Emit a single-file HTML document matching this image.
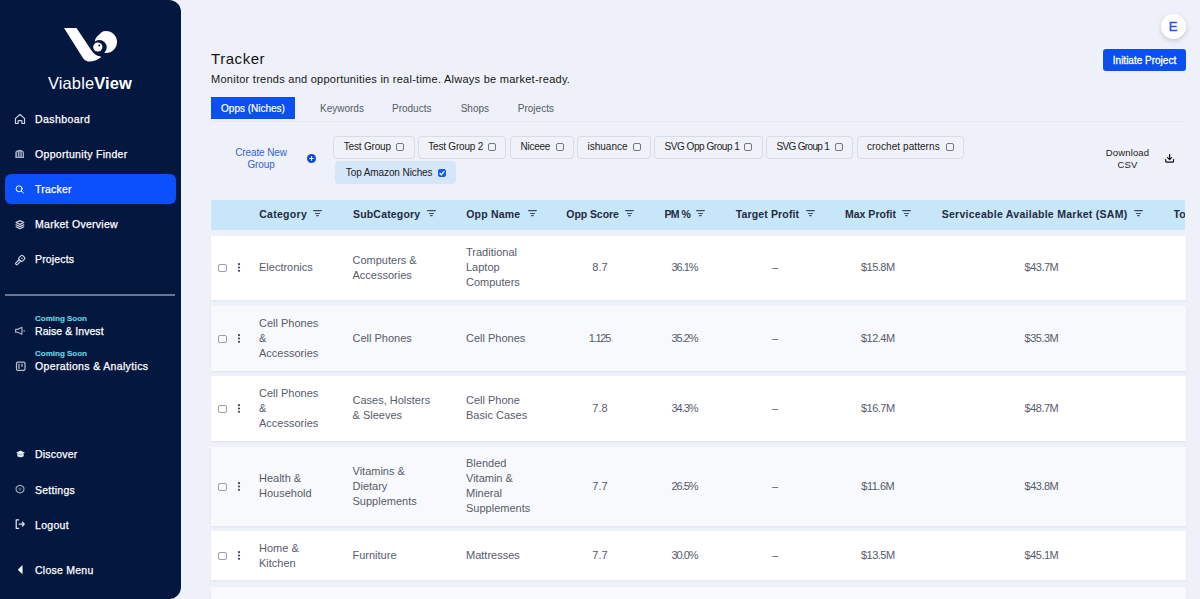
<!DOCTYPE html>
<html><head><meta charset="utf-8">
<style>
*{box-sizing:border-box;margin:0;padding:0}
html,body{width:1200px;height:599px;overflow:hidden;background:#eef1f9;font-family:"Liberation Sans",sans-serif}
.abs{position:absolute}
#side{position:absolute;left:0;top:0;width:181px;height:599px;background:#04173f;border-radius:0 12px 12px 0}
.nav{position:absolute;left:35px;color:#fff;font-size:10.5px;line-height:14px;white-space:nowrap;-webkit-text-stroke:0.25px #fff}
.soon{position:absolute;left:35px;color:#62d8e0;font-size:8px;font-weight:bold;line-height:9px;white-space:nowrap;-webkit-text-stroke:0.15px #62d8e0}
.t{position:absolute;white-space:nowrap}
.tab{font-size:10px;color:#555b66;line-height:12px}
.chip{position:absolute;border:1px solid #d8dce4;border-radius:4px;background:#f0f2f9}
.ct{font-size:10px;line-height:12px;color:#222}
.cb{position:absolute;width:8.2px;height:8px;border:1px solid #74777e;border-radius:2px}
.chip.sel{background:#d5e6f9;border-color:#d5e6f9}
.cb.on{background:#1a5ce6;border-color:#1a5ce6}
.cb.on svg{position:absolute;left:-0.9px;top:-1px}
.hdr{position:absolute;left:211px;top:200px;width:974.3px;height:30px;background:#c8e6f9}
.hl{position:absolute;font-size:10.5px;font-weight:bold;color:#1f2a44;white-space:nowrap;line-height:14px}
.fi{position:absolute;top:210px}
.row{position:absolute;left:211px;width:974.5px;background:#fff;box-shadow:0 1px 2px rgba(40,50,90,.07)}
.row.g{background:#f8f9fc}
.c{position:absolute;font-size:11px;line-height:15px;color:#575c6a;white-space:nowrap}
.ctr{text-align:center}
.rcb{position:absolute;left:7.2px;width:8.7px;height:8px;border:1.1px solid #9a9ea6;border-radius:2px}
.keb{position:absolute;left:26px;fill:#3f4558}
</style></head><body>
<div id="side">
<svg class="abs" style="left:0;top:0" width="181" height="100" viewBox="0 0 181 100">
<defs><clipPath id="cl"><path d="M94,39.5 L106,28 L130,28 L130,70 L80,70 Z"/></clipPath></defs>
<path d="M64,28 L76.5,28 L91.5,50.5 Q95,56 101,56.5 L100.5,57.5 Q95,62 88,61.5 Q84,60.5 82,56.5 Z" fill="#fff"/>
<circle cx="106" cy="42" r="11" fill="#fff" clip-path="url(#cl)"/>
<circle cx="99.4" cy="47.4" r="7.3" fill="#04173f"/>
<circle cx="97.8" cy="47" r="4.6" fill="#fff"/>
<circle cx="99.3" cy="45.4" r="1" fill="#04173f"/>
</svg>
<div class="t" style="left:48px;top:73.8px;font-size:16.5px;color:#fff;line-height:18px;letter-spacing:0.1px">Viable<b>View</b></div>
<div class="abs" style="left:5px;top:174.3px;width:170.5px;height:29.7px;background:#0b50fa;border-radius:6px"></div>
<div class="nav" style="top:112.2px;letter-spacing:0.43px">Dashboard</div>
<div class="nav" style="top:147.2px;letter-spacing:0.31px">Opportunity Finder</div>
<div class="nav" style="top:182.2px;letter-spacing:0.21px">Tracker</div>
<div class="nav" style="top:217.2px;letter-spacing:0.28px">Market Overview</div>
<div class="nav" style="top:252.2px;letter-spacing:0.17px">Projects</div>
<div class="nav" style="top:323.5px;letter-spacing:0.07px">Raise &amp; Invest</div>
<div class="nav" style="top:358.5px;letter-spacing:0.35px">Operations &amp; Analytics</div>
<div class="nav" style="top:447.4px;letter-spacing:0.19px">Discover</div>
<div class="nav" style="top:482.5px;letter-spacing:0.26px">Settings</div>
<div class="nav" style="top:517.6px;letter-spacing:0.31px">Logout</div>
<div class="nav" style="top:562.8px;letter-spacing:0.25px">Close Menu</div>
<div class="abs" style="left:5px;top:294.3px;width:170.3px;height:1.6px;background:#6c7493"></div>
<div class="soon" style="top:313.6px">Coming Soon</div>
<div class="soon" style="top:348.6px">Coming Soon</div>
<svg class="abs" style="left:0;top:0" width="40" height="599" viewBox="0 0 40 599" fill="none" stroke="#d3d7e6" stroke-width="1.2" stroke-linejoin="round" stroke-linecap="round">
<path d="M15.5,118.4 L20,114.5 L24.5,118.4 V123.5 H21.9 V121.3 Q21.9,120.6 21.2,120.6 H18.8 Q18.1,120.6 18.1,121.3 V123.5 H15.5 Z" stroke-width="1.15"/>
<path d="M15.3,158 V152.8 Q15.3,150.3 19.6,149.8 Q24,150.3 24,152.8 V158 Z" fill="#a9b0c8" stroke="none"/><path d="M17.4,152.3 V156.4 M19.9,152 V156.4 M22.3,152.3 V156.4" stroke="#04173f" stroke-width="0.9"/>
<circle cx="19.1" cy="188.8" r="3" stroke="#fff" stroke-width="1"/>
<path d="M21.3,191 L23.4,193" stroke="#fff" stroke-width="1"/>
<path d="M19.9,220.6 L23.8,222.5 L19.9,224.4 L16,222.5 Z M16,224.7 L19.9,226.6 L23.8,224.7 M16,226.8 L19.9,228.7 L23.8,226.8"/>
<g transform="rotate(45 21.8 258.4)"><rect x="19.3" y="255.7" width="5" height="5.4" rx="1.6" stroke-width="1.1"/><rect x="20.7" y="261.1" width="2.2" height="5.6" rx="1" stroke-width="1.1"/><circle cx="21.8" cy="258.2" r="0.7" fill="#d3d7e6" stroke="none"/></g>
<path d="M15.6,329.4 H17.6 L21.9,327.3 V334.3 L17.6,332.2 H15.6 Z M23.7,330.8 H24.6" stroke="#a9adbf"/>
<rect x="16.5" y="362.1" width="8.5" height="8.3" rx="1.4" stroke="#b9bfd4" stroke-width="1.2"/>
<path d="M19,364 V368.4 M22,364 V366.4" stroke="#c9cee0" stroke-width="1.1"/>
<path d="M17.3,453.6 V456.2 Q20.5,458.4 23.7,456.2 V453.6 L20.5,455.2 Z" fill="#e6e8f0" stroke="none"/>
<path d="M20.5,450.4 L25,452.7 L20.5,455 L16,452.7 Z" fill="#e6e8f0" stroke="none"/>
<path d="M20,485.2 L22,486 L23.6,487.2 L24,489.1 L23.6,491 L22,492.2 L20,492.9 L18,492.2 L16.4,491 L16,489.1 L16.4,487.2 L18,486 Z" stroke="#a5abc0" stroke-width="1.1"/>
<circle cx="20" cy="489.1" r="1.6" fill="#4a5578" stroke="none"/>
<path d="M18.6,519.9 H16.2 V528.3 H18.6 M19.3,524.1 H24.3 M22.3,522.1 L24.3,524.1 L22.3,526.1" stroke="#e8eaf2"/>
<path d="M22.5,565 V574.3 L17.8,569.65 Z" fill="#fff" stroke="none"/>
</svg>
</div>
<div class="t" style="left:211px;top:49.3px;font-size:15px;color:#111;line-height:20px;letter-spacing:0.55px">Tracker</div>
<div class="t" style="left:211px;top:71.8px;font-size:11px;color:#151515;line-height:14px;letter-spacing:0.26px">Monitor trends and opportunities in real-time. Always be market-ready.</div>
<div class="abs" style="left:211px;top:96.7px;width:83.8px;height:22px;background:#0b4ff3"></div>
<div class="t tab" style="left:211px;width:84px;text-align:center;color:#fff;-webkit-text-stroke:0.2px #fff;top:102.7px">Opps (Niches)</div>
<div class="t tab" style="left:320px;top:102.7px">Keywords</div>
<div class="t tab" style="left:392px;top:102.7px">Products</div>
<div class="t tab" style="left:460.7px;top:102.7px">Shops</div>
<div class="t tab" style="left:517.8px;top:102.7px">Projects</div>
<div class="abs" style="left:211px;top:121px;width:975px;height:1px;background:#e5e8f0"></div>
<div class="abs" style="left:1160.5px;top:13.5px;width:25px;height:25px;border-radius:50%;background:#fff;box-shadow:0 2px 5px rgba(0,0,0,.16)"></div>
<div class="t" style="left:1160.5px;top:19.1px;width:25px;text-align:center;font-size:13px;color:#2455d6;line-height:15px;-webkit-text-stroke:0.4px #2455d6">E</div>
<div class="abs" style="left:1103px;top:49px;width:83px;height:22px;background:#0b4ff3;border-radius:3px"></div>
<div class="t" style="left:1103px;top:54.5px;width:83px;text-align:center;font-size:10px;color:#fff;line-height:12px;-webkit-text-stroke:0.3px #fff">Initiate Project</div>
<div class="chip" style="left:332.5px;top:135.5px;width:82.0px;height:23px"></div>
<div class="t ct" style="left:343.7px;top:141.0px;letter-spacing:-0.18px">Test Group</div>
<div class="cb" style="left:396.3px;top:142.8px"></div>
<div class="chip" style="left:417.8px;top:135.5px;width:88.5px;height:23px"></div>
<div class="t ct" style="left:428.3px;top:141.0px;letter-spacing:-0.21px">Test Group 2</div>
<div class="cb" style="left:488.3px;top:142.8px"></div>
<div class="chip" style="left:510.0px;top:135.5px;width:63.8px;height:23px"></div>
<div class="t ct" style="left:520.5px;top:141.0px;letter-spacing:-0.27px">Niceee</div>
<div class="cb" style="left:555.5px;top:142.8px"></div>
<div class="chip" style="left:577.0px;top:135.5px;width:74.0px;height:23px"></div>
<div class="t ct" style="left:587.5px;top:141.0px;letter-spacing:0px">ishuance</div>
<div class="cb" style="left:632.5px;top:142.8px"></div>
<div class="chip" style="left:654.0px;top:135.5px;width:108.5px;height:23px"></div>
<div class="t ct" style="left:664.5px;top:141.0px;letter-spacing:-0.45px">SVG Opp Group 1</div>
<div class="cb" style="left:744.25px;top:142.8px"></div>
<div class="chip" style="left:765.9px;top:135.5px;width:86.7px;height:23px"></div>
<div class="t ct" style="left:776.5px;top:141.0px;letter-spacing:-0.66px">SVG Group 1</div>
<div class="cb" style="left:834.6px;top:142.8px"></div>
<div class="chip" style="left:856.6px;top:135.5px;width:107.3px;height:23px"></div>
<div class="t ct" style="left:866.9px;top:141.0px;letter-spacing:0.07px">crochet patterns</div>
<div class="cb" style="left:945.5px;top:142.8px"></div>
<div class="chip sel" style="left:335px;top:161.3px;width:120.8px;height:23px"></div>
<div class="t ct" style="left:345.8px;top:167.3px;letter-spacing:-0.1px">Top Amazon Niches</div>
<div class="cb on" style="left:438px;top:169px"><svg width="8" height="8" viewBox="0 0 8 8"><path d="M1.6,4.1 L3.3,5.8 L6.4,2.2" stroke="#fff" stroke-width="1.3" fill="none"/></svg></div>
<div class="t" style="left:225px;top:146.6px;width:72px;text-align:center;font-size:10px;line-height:12.3px;color:#3463d9;letter-spacing:-0.12px">Create New<br>Group</div>
<svg class="abs" style="left:307px;top:154.2px" width="9" height="9" viewBox="0 0 9 9"><circle cx="4.5" cy="4.5" r="4.5" fill="#0b48e0"/><path d="M4.5,2.3V6.7M2.3,4.5H6.7" stroke="#fff" stroke-width="1.2"/></svg>
<div class="t" style="left:1095px;top:146.5px;width:65px;text-align:center;font-size:9.5px;line-height:12.3px;color:#222;letter-spacing:0.15px">Download<br>CSV</div>
<svg class="abs" style="left:1165px;top:154px" width="10" height="9" viewBox="0 0 10 9"><path d="M4.6,0.6V5.6M2.6,3.6L4.6,5.6L6.6,3.6" stroke="#151515" stroke-width="1.25" fill="none" stroke-linecap="round" stroke-linejoin="round"/><path d="M0.7,5.6V7.4Q0.7,8.2 1.5,8.2H7.7Q8.5,8.2 8.5,7.4V5.6" stroke="#151515" stroke-width="1.2" fill="none" stroke-linecap="round"/></svg>
<div class="hdr"></div>
<div class="hl" style="left:259.2px;top:207.2px;letter-spacing:0.29px">Category</div>
<svg class="fi" style="left:313px" width="10" height="8" viewBox="0 0 10 8"><path d="M0.6,0.6H8.4M2.5,3.5H6.5M3.6,5.6H5.3" stroke="#3c4a5e" stroke-width="1.15" stroke-linecap="round"/></svg>
<div class="hl" style="left:353px;top:207.2px;letter-spacing:0.18px">SubCategory</div>
<svg class="fi" style="left:426.7px" width="10" height="8" viewBox="0 0 10 8"><path d="M0.6,0.6H8.4M2.5,3.5H6.5M3.6,5.6H5.3" stroke="#3c4a5e" stroke-width="1.15" stroke-linecap="round"/></svg>
<div class="hl" style="left:466.2px;top:207.2px;letter-spacing:0.21px">Opp Name</div>
<svg class="fi" style="left:527.6px" width="10" height="8" viewBox="0 0 10 8"><path d="M0.6,0.6H8.4M2.5,3.5H6.5M3.6,5.6H5.3" stroke="#3c4a5e" stroke-width="1.15" stroke-linecap="round"/></svg>
<div class="hl" style="left:566.3px;top:207.2px;letter-spacing:-0.07px">Opp Score</div>
<svg class="fi" style="left:625px" width="10" height="8" viewBox="0 0 10 8"><path d="M0.6,0.6H8.4M2.5,3.5H6.5M3.6,5.6H5.3" stroke="#3c4a5e" stroke-width="1.15" stroke-linecap="round"/></svg>
<div class="hl" style="left:664.4px;top:207.2px;letter-spacing:-0.53px">PM %</div>
<svg class="fi" style="left:696px" width="10" height="8" viewBox="0 0 10 8"><path d="M0.6,0.6H8.4M2.5,3.5H6.5M3.6,5.6H5.3" stroke="#3c4a5e" stroke-width="1.15" stroke-linecap="round"/></svg>
<div class="hl" style="left:735.75px;top:207.2px;letter-spacing:0.14px">Target Profit</div>
<svg class="fi" style="left:805.5px" width="10" height="8" viewBox="0 0 10 8"><path d="M0.6,0.6H8.4M2.5,3.5H6.5M3.6,5.6H5.3" stroke="#3c4a5e" stroke-width="1.15" stroke-linecap="round"/></svg>
<div class="hl" style="left:844.9px;top:207.2px;letter-spacing:0.03px">Max Profit</div>
<svg class="fi" style="left:902.3px" width="10" height="8" viewBox="0 0 10 8"><path d="M0.6,0.6H8.4M2.5,3.5H6.5M3.6,5.6H5.3" stroke="#3c4a5e" stroke-width="1.15" stroke-linecap="round"/></svg>
<div class="hl" style="left:941.7px;top:207.2px;letter-spacing:0.27px">Serviceable Available Market (SAM)</div>
<svg class="fi" style="left:1133.6px" width="10" height="8" viewBox="0 0 10 8"><path d="M0.6,0.6H8.4M2.5,3.5H6.5M3.6,5.6H5.3" stroke="#3c4a5e" stroke-width="1.15" stroke-linecap="round"/></svg>
<div style="position:absolute;left:1173.5px;top:207.2px;width:11.8px;overflow:hidden"><div class="hl" style="position:static;letter-spacing:0.2px">Total</div></div>
<div class="row" style="top:235.7px;height:64.1px">
<span class="rcb" style="top:28.4px"></span>
<svg class="keb" style="top:27.5px" width="4" height="9" viewBox="0 0 4 9"><circle cx="2" cy="1.2" r="1.1"/><circle cx="2" cy="4.5" r="1.1"/><circle cx="2" cy="7.8" r="1.1"/></svg>
<div class="c" style="left:48px;top:24.5px">Electronics</div>
<div class="c" style="left:141.5px;top:17.0px">Computers &amp;<br>Accessories</div>
<div class="c" style="left:255px;top:9.5px">Traditional<br>Laptop<br>Computers</div>
<div class="c ctr" style="left:339.00px;width:100px;top:24.5px;letter-spacing:0px">8.7</div>
<div class="c ctr" style="left:423.50px;width:100px;top:24.5px;letter-spacing:-1.0px">36.1%</div>
<div class="c ctr" style="left:514.00px;width:100px;top:24.5px;letter-spacing:0px">–</div>
<div class="c ctr" style="left:616.75px;width:100px;top:24.5px;letter-spacing:-0.5px">$15.8M</div>
<div class="c ctr" style="left:780.45px;width:100px;top:24.5px;letter-spacing:-0.5px">$43.7M</div>
</div>
<div class="row g" style="top:305.7px;height:65px">
<span class="rcb" style="top:28.9px"></span>
<svg class="keb" style="top:28.0px" width="4" height="9" viewBox="0 0 4 9"><circle cx="2" cy="1.2" r="1.1"/><circle cx="2" cy="4.5" r="1.1"/><circle cx="2" cy="7.8" r="1.1"/></svg>
<div class="c" style="left:48px;top:10.0px">Cell Phones<br>&amp;<br>Accessories</div>
<div class="c" style="left:141.5px;top:25.0px">Cell Phones</div>
<div class="c" style="left:255px;top:25.0px">Cell Phones</div>
<div class="c ctr" style="left:338.40px;width:100px;top:25.0px;letter-spacing:-1.2px">1.125</div>
<div class="c ctr" style="left:423.50px;width:100px;top:25.0px;letter-spacing:-1.0px">35.2%</div>
<div class="c ctr" style="left:514.00px;width:100px;top:25.0px;letter-spacing:0px">–</div>
<div class="c ctr" style="left:616.75px;width:100px;top:25.0px;letter-spacing:-0.5px">$12.4M</div>
<div class="c ctr" style="left:780.45px;width:100px;top:25.0px;letter-spacing:-0.5px">$35.3M</div>
</div>
<div class="row" style="top:376px;height:64.8px">
<span class="rcb" style="top:28.8px"></span>
<svg class="keb" style="top:27.9px" width="4" height="9" viewBox="0 0 4 9"><circle cx="2" cy="1.2" r="1.1"/><circle cx="2" cy="4.5" r="1.1"/><circle cx="2" cy="7.8" r="1.1"/></svg>
<div class="c" style="left:48px;top:9.9px">Cell Phones<br>&amp;<br>Accessories</div>
<div class="c" style="left:141.5px;top:17.4px">Cases, Holsters<br>&amp; Sleeves</div>
<div class="c" style="left:255px;top:17.4px">Cell Phone<br>Basic Cases</div>
<div class="c ctr" style="left:339.00px;width:100px;top:24.9px;letter-spacing:0px">7.8</div>
<div class="c ctr" style="left:423.50px;width:100px;top:24.9px;letter-spacing:-1.0px">34.3%</div>
<div class="c ctr" style="left:514.00px;width:100px;top:24.9px;letter-spacing:0px">–</div>
<div class="c ctr" style="left:616.75px;width:100px;top:24.9px;letter-spacing:-0.5px">$16.7M</div>
<div class="c ctr" style="left:780.45px;width:100px;top:24.9px;letter-spacing:-0.5px">$48.7M</div>
</div>
<div class="row g" style="top:446.5px;height:79.2px">
<span class="rcb" style="top:36.0px"></span>
<svg class="keb" style="top:35.1px" width="4" height="9" viewBox="0 0 4 9"><circle cx="2" cy="1.2" r="1.1"/><circle cx="2" cy="4.5" r="1.1"/><circle cx="2" cy="7.8" r="1.1"/></svg>
<div class="c" style="left:48px;top:24.6px">Health &amp;<br>Household</div>
<div class="c" style="left:141.5px;top:17.1px">Vitamins &amp;<br>Dietary<br>Supplements</div>
<div class="c" style="left:255px;top:9.6px">Blended<br>Vitamin &amp;<br>Mineral<br>Supplements</div>
<div class="c ctr" style="left:339.00px;width:100px;top:32.1px;letter-spacing:0px">7.7</div>
<div class="c ctr" style="left:423.50px;width:100px;top:32.1px;letter-spacing:-1.0px">26.5%</div>
<div class="c ctr" style="left:514.00px;width:100px;top:32.1px;letter-spacing:0px">–</div>
<div class="c ctr" style="left:616.75px;width:100px;top:32.1px;letter-spacing:-0.5px">$11.6M</div>
<div class="c ctr" style="left:780.45px;width:100px;top:32.1px;letter-spacing:-0.5px">$43.8M</div>
</div>
<div class="row" style="top:531.3px;height:49.2px">
<span class="rcb" style="top:21.0px"></span>
<svg class="keb" style="top:20.1px" width="4" height="9" viewBox="0 0 4 9"><circle cx="2" cy="1.2" r="1.1"/><circle cx="2" cy="4.5" r="1.1"/><circle cx="2" cy="7.8" r="1.1"/></svg>
<div class="c" style="left:48px;top:9.6px">Home &amp;<br>Kitchen</div>
<div class="c" style="left:141.5px;top:17.1px">Furniture</div>
<div class="c" style="left:255px;top:17.1px">Mattresses</div>
<div class="c ctr" style="left:339.00px;width:100px;top:17.1px;letter-spacing:0px">7.7</div>
<div class="c ctr" style="left:423.50px;width:100px;top:17.1px;letter-spacing:-1.0px">30.0%</div>
<div class="c ctr" style="left:514.00px;width:100px;top:17.1px;letter-spacing:0px">–</div>
<div class="c ctr" style="left:616.75px;width:100px;top:17.1px;letter-spacing:-0.5px">$13.5M</div>
<div class="c ctr" style="left:780.45px;width:100px;top:17.1px;letter-spacing:-0.5px">$45.1M</div>
</div>
<div class="row g" style="top:586.7px;height:60px">
</div>
</body></html>
